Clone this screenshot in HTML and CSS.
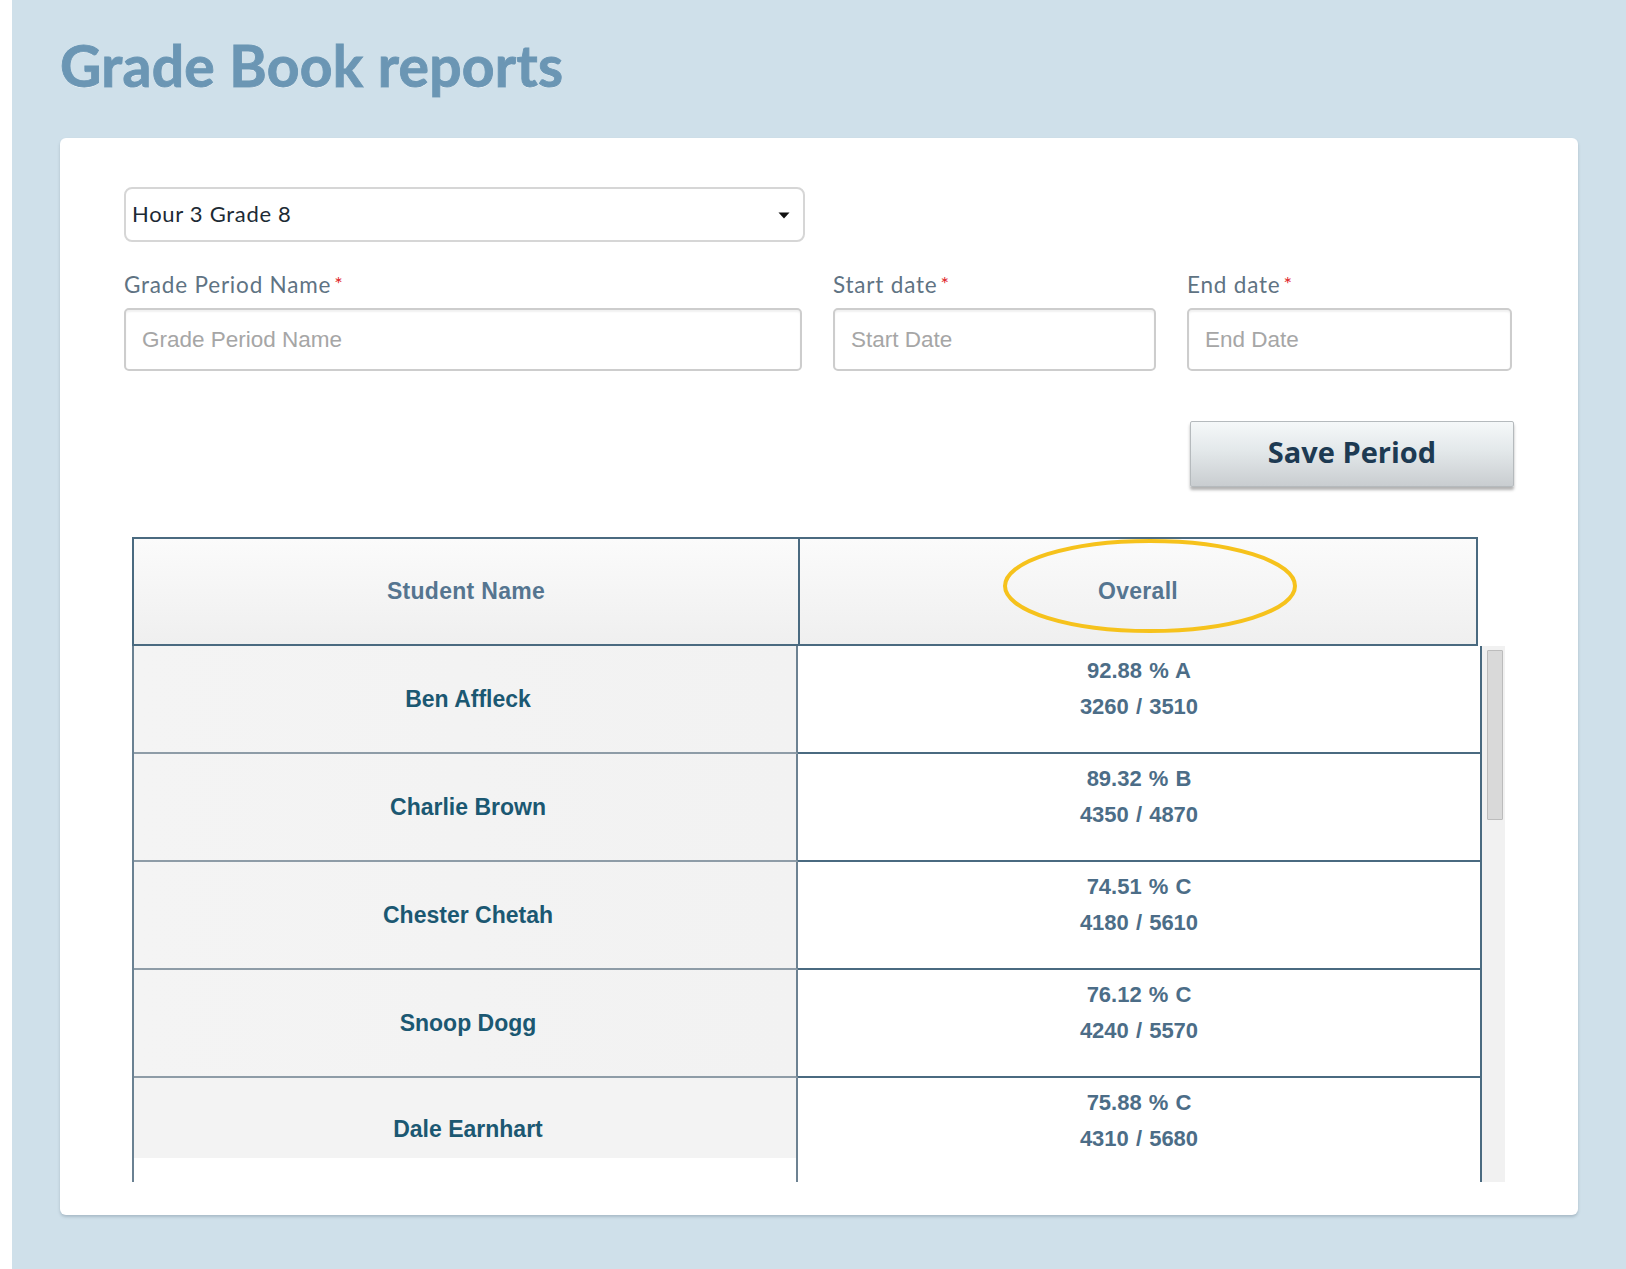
FILE: index.html
```html
<!DOCTYPE html>
<html lang="en">
<head>
<meta charset="utf-8">
<title>Grade Book reports</title>
<link rel="stylesheet" href="styles.css">
</head>
<body>
<div class="strip"></div>
<main class="main">
  <h1 class="title">Grade Book reports</h1>
  <section class="card">
    <div class="select">
      <span class="select-text">Hour 3 Grade 8</span>
      <svg class="caret" width="12" height="7" viewBox="0 0 12 7"><path d="M0.5 0.5 L11.5 0.5 L6 6.5 Z" fill="#111"/></svg>
    </div>

    <div class="fields">
      <div class="field">
        <label class="label">Grade Period Name<span class="req">*</span></label>
        <div class="input"><span class="ph">Grade Period Name</span></div>
      </div>
      <div class="field">
        <label class="label">Start date<span class="req">*</span></label>
        <div class="input"><span class="ph">Start Date</span></div>
      </div>
      <div class="field">
        <label class="label">End date<span class="req">*</span></label>
        <div class="input"><span class="ph">End Date</span></div>
      </div>
    </div>

    <div class="actions">
      <button class="btn">Save Period</button>
    </div>

    <div class="report">
      <div class="head">
        <div class="hcell hleft">Student Name</div>
        <div class="hcell hright">Overall
          <svg class="circle" width="300" height="100" viewBox="0 0 300 100"><ellipse cx="150" cy="50" rx="145" ry="45" fill="none" stroke="#f6c21c" stroke-width="4"/></svg>
        </div>
      </div>
      <div class="body-wrap">
        <div class="rows">
          <div class="row">
            <div class="name">Ben Affleck</div>
            <div class="score"><div>92.88 % A</div><div>3260 / 3510</div></div>
          </div>
          <div class="row">
            <div class="name">Charlie Brown</div>
            <div class="score"><div>89.32 % B</div><div>4350 / 4870</div></div>
          </div>
          <div class="row">
            <div class="name">Chester Chetah</div>
            <div class="score"><div>74.51 % C</div><div>4180 / 5610</div></div>
          </div>
          <div class="row">
            <div class="name">Snoop Dogg</div>
            <div class="score"><div>76.12 % C</div><div>4240 / 5570</div></div>
          </div>
          <div class="row last">
            <div class="name">Dale Earnhart</div>
            <div class="score"><div>75.88 % C</div><div>4310 / 5680</div></div>
          </div>
        </div>
        <div class="scrollbar"><div class="thumb"></div></div>
      </div>
    </div>
  </section>
</main>
</body>
</html>
```

FILE: styles.css
```css
* { box-sizing: border-box; }

html, body {
  margin: 0;
  padding: 0;
}

body {
  display: flex;
  min-height: 1269px;
  background: #cfe0ea;
  font-family: "Liberation Sans", Arial, sans-serif;
}

.strip {
  width: 12px;
  background: #ffffff;
  flex: none;
}

.main {
  flex: 1;
  padding: 0 48px 54px 48px;
}

.title {
  margin: 33px 0 0 0;
  height: 105px;
  font-family: Lato, sans-serif;
  font-weight: 700;
  font-size: 57px;
  line-height: 65px;
  color: #6b96b4;
  letter-spacing: 0.3px;
  -webkit-text-stroke: 0.9px #6b96b4;
  text-shadow: 0 1px 0 rgba(255,255,255,0.55);
}

.card {
  background: #ffffff;
  border-radius: 6px;
  box-shadow: 0 2px 3px rgba(60, 80, 100, 0.25);
  padding: 49px 66px 33px 64px;
  height: 1077px;
}

.select {
  width: 681px;
  height: 55px;
  border: 2px solid #d6d6d6;
  border-radius: 8px;
  display: flex;
  align-items: center;
  justify-content: space-between;
  padding: 0 13px 3px 6px;
}

.select-text {
  font-family: Lato, sans-serif;
  font-size: 22px;
  color: #1c2a34;
  letter-spacing: 0.7px;
}

.caret { display: block; margin-top: 4px; }

.fields {
  display: grid;
  grid-template-columns: 678px 323px 325px;
  column-gap: 31px;
  margin-top: 27px;
}

.field {
  display: flex;
  flex-direction: column;
  gap: 11px;
}

.label {
  font-family: Lato, sans-serif;
  font-size: 22.5px;
  line-height: 28px;
  height: 28px;
  color: #5f7383;
  letter-spacing: 0.8px;
}

.req {
  color: #e0262a;
  font-size: 20px;
  vertical-align: 2px;
  margin-left: 3px;
}

.input {
  height: 63px;
  border: 2px solid #cdcdcd;
  border-radius: 5px;
  box-shadow: inset 0 2px 2px rgba(0,0,0,0.06);
  display: flex;
  align-items: center;
  padding-left: 16px;
}

.ph {
  font-family: "Liberation Sans", Arial, sans-serif;
  font-size: 22.5px;
  color: #a6a6a6;
}

.actions {
  display: flex;
  justify-content: flex-end;
  margin-top: 50px;
  margin-right: -2px;
}

.btn {
  width: 324px;
  height: 66px;
  border: 1px solid #b5babd;
  border-radius: 2px;
  background: linear-gradient(#f5f8f9, #e3e8ea 45%, #c9cdd0);
  box-shadow: 0 3px 3px rgba(0,0,0,0.3);
  font-family: "Open Sans", sans-serif;
  font-weight: 700;
  font-size: 29px;
  color: #1d3a52;
  padding: 0 0 6px 0;
  cursor: pointer;
}

.report {
  margin: 50px 0 0 8px;
}

.head {
  display: grid;
  grid-template-columns: 666px 680px;
  width: 1346px;
  height: 109px;
  border-top: 2px solid #4a6a80;
  border-bottom: 2px solid #4a6a80;
}

.hcell {
  display: flex;
  align-items: center;
  justify-content: center;
  background: linear-gradient(#fbfbfb, #efefef);
  font-weight: 700;
  font-size: 23px;
  color: #557590;
  letter-spacing: 0.3px;
}

.hleft {
  border-left: 2px solid #4a6a80;
}

.hright {
  position: relative;
  border-left: 2px solid #4a6a80;
  border-right: 2px solid #4a6a80;
}

.circle {
  position: absolute;
  left: 200px;
  top: -3px;
}

.body-wrap {
  display: flex;
  height: 536px;
  overflow: hidden;
}

.rows {
  width: 1350px;
  border-left: 2px solid #6a8192;
  border-right: 2px solid #4a6a80;
}

.row {
  display: grid;
  grid-template-columns: 664px 1fr;
  height: 108px;
}

.name {
  display: flex;
  align-items: center;
  justify-content: center;
  background: linear-gradient(90deg, #f4f4f4, #f2f2f2);
  border-bottom: 2px solid #8e9ca7;
  border-right: 2px solid #6d8292;
  padding-left: 6px;
  font-weight: 700;
  font-size: 23px;
  color: #1b5872;
}

.score {
  border-bottom: 2px solid #4a6a80;
  padding-top: 7px;
  text-align: center;
  font-weight: 700;
  font-size: 22px;
  line-height: 36px;
  word-spacing: 1px;
  color: #4c6d87;
}

.row.last .name {
  background: linear-gradient(#f3f3f3 80px, #ffffff 80px);
  align-items: flex-start;
  padding-top: 38px;
}

.scrollbar {
  width: 23px;
  background: #f1f1f1;
  flex: none;
  padding: 4px 2px 0 5px;
}

.thumb {
  height: 170px;
  background: #d9d9d9;
  border: 1px solid #bcbcbc;
  border-radius: 1px;
}
```
